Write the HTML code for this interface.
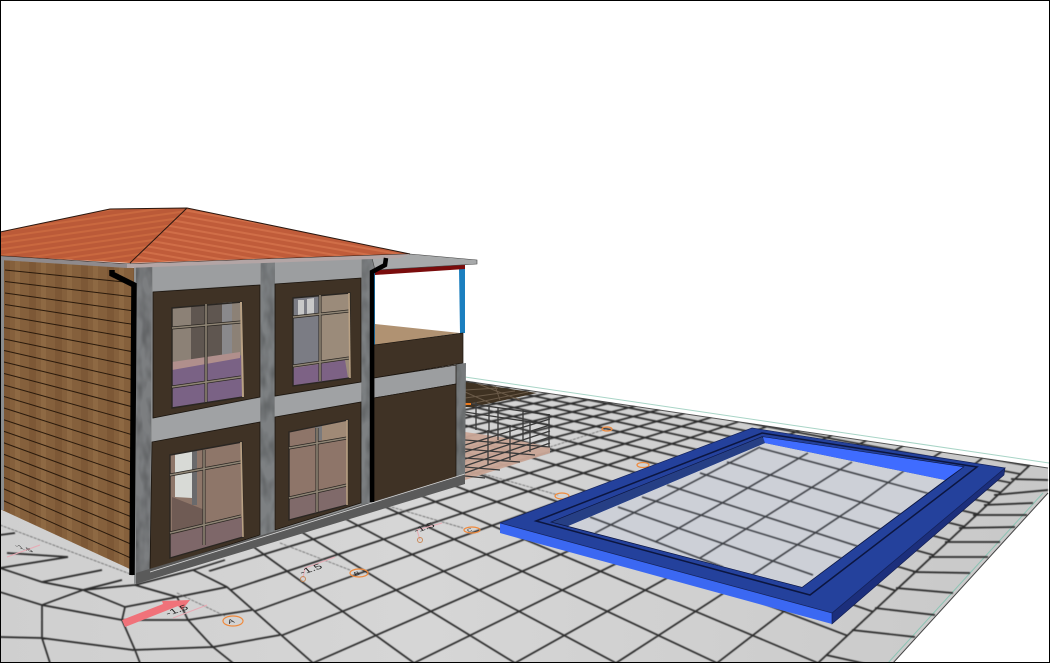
<!DOCTYPE html>
<html><head><meta charset="utf-8"><style>
html,body{margin:0;padding:0;background:#fff;width:1050px;height:663px;overflow:hidden}
svg{display:block}
text{font-family:"Liberation Sans",sans-serif;fill:#222}
.fd{stroke:#2a2622;stroke-width:3;fill:none}
.fo{stroke:#2a2622;stroke-width:1.4;fill:none}
.fl{stroke:#8e8474;stroke-width:1.6;fill:none}
.or{fill:none;stroke:#f08a3c;stroke-width:1.2}
</style></head><body>
<svg width="1050" height="663" viewBox="0 0 1050 663" xmlns="http://www.w3.org/2000/svg">
<defs>
<filter id="b" x="-5%" y="-5%" width="110%" height="110%"><feGaussianBlur stdDeviation="0.45"/></filter>
<filter id="cn" x="0" y="0" width="100%" height="100%"><feTurbulence type="fractalNoise" baseFrequency=".12 .05" numOctaves="2" seed="3" result="n"/><feColorMatrix in="n" type="matrix" values="0 0 0 0 0  0 0 0 0 0  0 0 0 0 0  .9 0 0 0 -.33"/><feComposite in2="SourceGraphic" operator="in" result="m"/><feMerge><feMergeNode in="SourceGraphic"/><feMergeNode in="m"/></feMerge></filter>
<clipPath id="gc"><polygon points="465,381 1048,468 1048,493 893,663 0,663 0,505"/></clipPath>
<clipPath id="uc"><polygon points="465,381 1030,465 818,663 313,663 227,587 140,510 300,420"/></clipPath>
<clipPath id="pc"><polygon points="568,526 765,443 945,480 802,587"/></clipPath>
<linearGradient id="gr" x1="0" y1="0" x2="1" y2="0"><stop offset="0" stop-color="#cfcfcf"/><stop offset=".4" stop-color="#d6d6d6"/><stop offset="1" stop-color="#c8c8c8"/></linearGradient>
<pattern id="roof" width="6" height="6" patternUnits="userSpaceOnUse" patternTransform="rotate(-8)"><rect width="6" height="6" fill="#bb5a38"/><rect width="6" height="2" fill="#c9683f"/></pattern>
<pattern id="roof2" width="6" height="6" patternUnits="userSpaceOnUse" patternTransform="rotate(10)"><rect width="6" height="6" fill="#c05c3a"/><rect width="6" height="2" fill="#d06e48"/></pattern>
<pattern id="wood" width="26" height="20" patternUnits="userSpaceOnUse"><rect width="26" height="20" fill="#85603c"/><rect x="3" width="7" height="20" fill="#7d5836"/><rect x="15" width="5" height="20" fill="#8e6943"/></pattern>
</defs>
<rect width="1050" height="663" fill="#fff"/>

<!-- ground -->
<polygon points="465,381 1048,468 1048,493 893,663 0,663 0,505" fill="url(#gr)"/>
<polyline points="465,377 1049,463" fill="none" stroke="#a8d4c6" stroke-width="1"/>
<polyline points="1048,493 893,663" fill="none" stroke="#8cc4b4" stroke-width="1" transform="translate(-5,0)"/>
<polyline points="465,381 1048,468" fill="none" stroke="#555" stroke-width="1"/>
<polyline points="1048,493 893,663" fill="none" stroke="#444" stroke-width="1"/>
<g filter="url(#b)">
<g clip-path="url(#gc)">
<g clip-path="url(#uc)">
<path stroke="#2c2c2c" stroke-width="1.7" fill="none" d="M1248 253L-1505 663M1248 253L-1404 663M1248 253L-1303 663M1248 253L-1202 663M1248 253L-1101 663M1248 253L-1000 663M1248 253L-899 663M1248 253L-798 663M1248 253L-697 663M1248 253L-596 663M1248 253L-495 663M1248 253L-394 663M1248 253L-293 663M1248 253L-192 663M1248 253L-91 663M1248 253L10 663M1248 253L111 663M1248 253L212 663M1248 253L313 663M1248 253L414 663M1248 253L515 663M1248 253L616 663M1248 253L717 663
M-150 255L414 663M-150 255L515 663M-150 255L616 663M-150 255L717 663M-150 255L818 663M-150 255L919 663M-150 255L1020 663M-150 255L1121 663M-150 255L1222 663M-150 255L1323 663M-150 255L1424 663M-150 255L1525 663M-150 255L1626 663M-150 255L1727 663M-150 255L1828 663M-150 255L1929 663M-150 255L2030 663M-150 255L2131 663M-150 255L2232 663M-150 255L2333 663M-150 255L2434 663M-150 255L2535 663M-150 255L2636 663M-150 255L2737 663"/>
</g>
<!-- right warp -->
<path stroke="#2c2c2c" stroke-width="1.7" fill="none" d="M1030 465L818 663M1011 479L1048 480M994 495L1048 490M984 505L1033 503M973 515L1027 515M959 528L1015 527M945 542L1000 542M929 557L988 557M913 572L970 573M896 588L953 593M875 608L935 615M852 630L915 637M826 655L885 668"/>
<!-- left warp -->
<path stroke="#2c2c2c" stroke-width="1.7" fill="none" d="M0 592L42 605L122 620M0 637L42 638L133 650L213 647L280 635M42 605L83 590L135 585M0 568L42 582L83 590L125 607M42 582L102 570M83 590L122 580M0 568L68 557M7 553L68 557M0 535L15 533M42 605L42 638L50 663M125 607L122 620L135 650L140 663M122 620L188 620M125 607L177 597L227 587M135 585L177 597M177 597L188 620L213 647L233 663M188 620L252 610M193 570L227 587L252 609L280 634L313 663M135 585L193 570L225 560"/>
<!-- dashed lines -->
<path stroke="#555" stroke-width=".7" fill="none" stroke-dasharray="3 1" d="M0 525L133 575M177 593L225 616M280 543L350 570M388 506L463 528M480 473L558 495M550 447L606 429"/>
</g>
</g>
<!-- brown ground -->
<polygon points="465,382 537,393 473,407 465,407" fill="#3f3222"/>
<path stroke="#6a5a48" stroke-width="1" fill="none" d="M465,390L498,388M465,398L515,391M465,405L528,392M478,384L520,400M465,392L490,403M495,386L500,400"/>

<!-- fence floor -->
<polygon points="465,432 500,437 550,447 550,453 465,480" fill="#c9a596" fill-opacity=".95"/>
<g stroke="#3a3a3a" stroke-width="1.3" fill="none">
<path d="M465,440L550,447M465,449L535,455M465,458L520,462M465,467L500,470M465,476L485,478M465,445L550,419M465,452L550,425M465,459L550,431M465,466L550,437M465,473L550,443M465,403L550,415M465,412L550,425M489,405V432M476,402V430M498,408V440M523,410V441M549,414V447M488,430V465M510,425V460M530,420V452"/>
</g>

<!-- orange markers -->
<ellipse class="or" cx="233" cy="621" rx="10" ry="5"/>
<ellipse class="or" cx="359" cy="573" rx="9" ry="4"/>
<ellipse class="or" cx="472" cy="530" rx="8" ry="3"/>
<ellipse class="or" cx="562" cy="496" rx="7" ry="3"/>
<ellipse class="or" cx="643" cy="465" rx="6" ry="2.5"/>
<ellipse class="or" cx="607" cy="429" rx="5" ry="2"/>
<rect x="465" y="403" width="6" height="2" fill="#f07a1c"/>
<text transform="matrix(.9,-.25,.3,.55,229,624)" font-size="10">A</text>
<text transform="matrix(.9,-.25,.3,.55,355,576)" font-size="9">B</text>
<text transform="matrix(.9,-.25,.3,.55,468,532)" font-size="7">C</text>
<!-- pink leaders and arrow -->
<path stroke="#e8aab4" stroke-width="1" fill="none" d="M173 618L207 605M303 578L305 568L335 557M420 540L417 530L442 523M7 557L40 545"/>
<circle cx="303" cy="579" r="2.5" fill="none" stroke="#c88a5a" stroke-width="1"/>
<circle cx="420" cy="540" r="2.5" fill="none" stroke="#c88a5a" stroke-width="1"/>
<polygon points="122,620 163,604 162,601 190,600 182,610 178,606 125,627" fill="#f0727a"/>
<text transform="matrix(.95,-.32,.45,.5,168,616)" font-size="13">-1.5</text>
<text transform="matrix(.95,-.32,.45,.5,302,575)" font-size="13">-1.5</text>
<text transform="matrix(.95,-.32,.45,.5,416,533)" font-size="12">-1.5</text>
<text transform="matrix(.95,.3,.45,.5,16,547)" font-size="11">-1.5</text>

<!-- POOL -->
<polygon points="500,523 500,533 832,624 832,613" fill="#3b68f2"/>
<polygon points="832,613 832,624 1004,475 1005,468" fill="#1c2f7c" stroke="#0f1a4a" stroke-width=".6"/>
<polygon points="500,523 752,428 1005,468 832,613" fill="#24419c" stroke="#14235c" stroke-width=".7"/>
<polygon points="536,521 762,433 977,467 810,595" fill="none" stroke="#0c1640" stroke-width="1.5"/>
<polygon points="552,522 762,437 963,467 802,587" fill="#24419c" stroke="#0c1640" stroke-width="1.3"/>
<polygon points="568,526 765,443 945,480 802,587" fill="#cdd0d7"/>
<polygon points="552,522 762,437 765,443 568,526" fill="#263f85"/>
<polygon points="763,437 963,467 945,480 765,443" fill="#3f6cff"/>
<g clip-path="url(#pc)" filter="url(#b)">
<path stroke="#3a3c42" stroke-width="1.5" fill="none" d="M595,533L760,447M655,542L808,453M700,558L852,462M752,575L860,503L960,430M820,575L945,487
M590,517L723,567M618,507L813,575M642,497L857,563L890,573M667,485L860,547L930,570M700,473L860,523L950,550M727,462L860,502L950,529M760,448L853,473L960,502"/>
</g>

<!-- BUILDING -->
<g>
<!-- wood wall -->
<polygon points="4,260 136,268 132,570 2,510" fill="url(#wood)"/>
<g stroke="#2a1a0c" stroke-width="1" fill="none">
<path d="M5,270L134,283M5,281.5L134,297M5,293L134,311M5,304.5L134,324.5M5,316L134,338M4,327.5L134,352M4,339L134,366M4,350.5L134,380M4,362L134,393.5M4,373.5L133,407M4,385L133,421M4,396.5L133,435M4,408L133,449M3,419.5L133,462.5M3,431L133,476M3,442.5L133,490M3,454L133,504M3,465.5L133,517.5M3,477L133,531M3,488.5L133,545M2,500L133,559"/>
</g>
<rect x="0" y="258" width="4" height="252" fill="#8a8c8e"/>

<!-- pillars and beams -->
<polygon points="134,264 374,256 374,500 134,584" fill="#8f9192"/>
<polygon points="456,364 466,363 465,477 456,480" fill="#777a7c" filter="url(#cn)"/>
<polygon points="136,266 152,265 150,575 136,578" fill="#7b7e80" filter="url(#cn)"/>
<polygon points="261,260 275,259 274,533 260,537" fill="#7d8082" filter="url(#cn)"/>
<polygon points="362,256 374,255 371,505 361,507" fill="#7d8082" filter="url(#cn)"/>
<polygon points="153,264 260,260 260,284 153,291" fill="#9c9ea0"/>
<polygon points="275,259 361,256 361,278 275,284" fill="#9c9ea0"/>
<polygon points="152,418 260,398 260,422 152,442" fill="#a0a2a4"/>
<polygon points="275,397 361,382 361,402 275,417" fill="#a0a2a4"/>
<!-- panels -->
<g fill="#3f3225" stroke="#1a140e" stroke-width=".8">
<polygon points="153,292 260,285 260,397 153,418"/>
<polygon points="275,284 361,278 361,382 275,396"/>
<polygon points="152,442 260,422 260,535 150,570"/>
<polygon points="275,417 361,402 361,503 275,530"/>
</g>

<!-- UL window -->
<polygon points="172,308 242,302 243,397 172,408" fill="#8c8176"/>
<polygon points="191,306 222,303 222,355 191,362" fill="#5f5650"/>
<polygon points="222,303 232,302 232,354 222,356" fill="#8a898c"/>
<polygon points="172,366 243,355 243,397 172,408" fill="#7a6285"/>
<polygon points="172,362 240,352 240,358 172,370" fill="#b08f8c"/>
<path class="fd" d="M172,328L241,322M172,387L241,377M206,304L206,402"/>
<path class="fo" d="M172,308L242,302L243,397L172,408Z"/>
<path class="fl" d="M172,328L241,322M172,387L241,377M206,304L206,402"/>
<path d="M241,302L243,397" stroke="#b9a184" stroke-width="2" fill="none"/>

<!-- UR window -->
<polygon points="293,298 350,293 350,378 293,386" fill="#9b8b7a"/>
<polygon points="293,298 320,296 320,362 293,366" fill="#7b7c84"/>
<polygon points="298,300 304,300 304,316 298,316" fill="#c8c8c8"/>
<polygon points="307,299 314,298 314,314 307,315" fill="#c8c8c8"/>
<polygon points="293,368 345,360 348,378 293,386" fill="#7d6285"/>
<path class="fd" d="M293,317L349,311M293,366L349,358M320,295L320,381"/>
<path class="fo" d="M293,298L350,293L350,378L293,386Z"/>
<path class="fl" d="M293,317L349,311M293,366L349,358M320,295L320,381"/>
<path d="M349,293L350,378" stroke="#b9a184" stroke-width="1.6" fill="none"/>

<!-- LL window -->
<polygon points="170,455 242,442 243,537 170,558" fill="#8e7669"/>
<polygon points="175,454 192,451 192,498 175,497" fill="#d8dad6"/>
<polygon points="192,451 197,450 197,505 192,505" fill="#6a6a6c"/>
<polygon points="172,497 205,510 205,535 172,544" fill="#6f5b54"/>
<polygon points="170,535 242,517 243,537 170,558" fill="#7e6769"/>
<path class="fd" d="M170,475L241,462M170,533L241,516M204,450L204,545"/>
<path class="fo" d="M170,455L242,442L243,537L170,558Z"/>
<path class="fl" d="M170,475L241,462M170,533L241,516M204,450L204,545"/>
<path d="M241,442L243,537" stroke="#b9a184" stroke-width="1.6" fill="none"/>

<!-- LR window -->
<polygon points="289,432 348,420 347,505 289,520" fill="#8e7569"/>
<polygon points="315,427 322,426 322,440 315,441" fill="#7a7a7c"/>
<polygon points="322,426 346,421 346,437 322,441" fill="#a08a76"/>
<polygon points="289,498 346,485 347,505 289,520" fill="#806a6a"/>
<path class="fd" d="M289,448L347,438M289,498L347,485M317,428L317,512"/>
<path class="fo" d="M289,432L348,420L347,505L289,520Z"/>
<path class="fl" d="M289,448L347,438M289,498L347,485M317,428L317,512"/>
<path d="M347,420L347,505" stroke="#b9a184" stroke-width="1.6" fill="none"/>

<!-- balcony -->
<polygon points="375,324 460,333 375,345" fill="#b09272"/>
<polygon points="459,268 465,267 465,333 460,333" fill="#1b7fbf"/>
<rect x="373" y="273" width="2" height="74" fill="#1b7fbf"/>
<polygon points="375,270 465,264 465,269 375,275" fill="#7a0c0c"/>
<polygon points="374,345 463,333 463,363 374,378" fill="#3f3225" stroke="#1a140e" stroke-width=".7"/>
<polygon points="374,378 456,365 456,384 374,398" fill="#9c9ea0" stroke="#1a140e" stroke-width=".7"/>
<polygon points="374,398 456,384 456,478 374,503" fill="#3f3225" stroke="#1a140e" stroke-width=".7"/>
<polygon points="372,258 410,254 477,260 477,264 375,270" fill="#a7a9aa" stroke="#444" stroke-width=".6"/>

<!-- plinth -->
<polygon points="136,573 465,474 465,484 136,584" fill="#5a5a5a"/>
<polyline points="150,572 465,474" fill="none" stroke="#d8d8d8" stroke-width=".8"/>

<!-- roof -->
<polygon points="0,232 110,209 187,208 130,263 0,256" fill="url(#roof)"/>
<polygon points="187,208 410,254 130,263" fill="url(#roof2)"/>
<path d="M0,232L110,209L187,208L410,254M187,208L130,263M0,256L127,264L410,254" fill="none" stroke="#2a1810" stroke-width="1"/>
<polygon points="0,256 127,264 127,268 0,260" fill="#8f8a8c"/>
<polygon points="127,264 410,254 400,258 127,268" fill="#b3a5a5"/>

<!-- downpipes -->
<path d="M112,270L112,274L134,285L132,575" fill="none" stroke="#000" stroke-width="5.5"/>
<path d="M386,258L385,265L372,272L372,502" fill="none" stroke="#000" stroke-width="4.5"/>
</g>

<!-- border -->
<rect x=".5" y=".5" width="1049" height="662" fill="none" stroke="#000" stroke-width="1"/>
</svg>
</body></html>
